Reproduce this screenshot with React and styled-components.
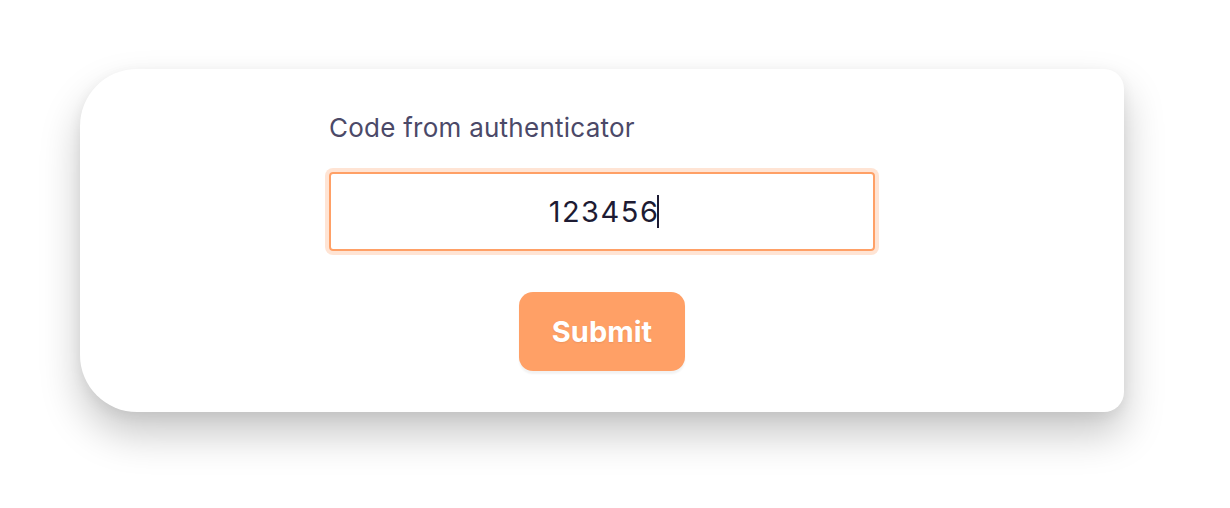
import React from "react";
import styled, { createGlobalStyle } from "styled-components";

const Global = createGlobalStyle`
  html, body { margin: 0; padding: 0; background: #ffffff; }
  body { font-family: Inter, "Noto Sans", sans-serif; }
  * { box-sizing: border-box; }
`;

const Page = styled.div`
  width: 1230px;
  height: 508px;
  padding: 69px 0 0 80px;
`;

const Card = styled.div`
  width: 1044px;
  height: 343px;
  background: #ffffff;
  border-radius: 57px 20px 20px 57px;
  box-shadow: 0 22px 40px rgba(0, 0, 0, 0.22), 0 4px 14px rgba(0, 0, 0, 0.06);
  display: flex;
  flex-direction: column;
  align-items: center;
  padding-top: 43px;
`;

const Form = styled.div`
  width: 546px;
  display: flex;
  flex-direction: column;
  align-items: center;
`;

const Label = styled.label`
  align-self: flex-start;
  font-size: 26px;
  letter-spacing: 0.25px;
  line-height: 32px;
  color: #4b4968;
  font-weight: 400;
`;

const Field = styled.div`
  margin-top: 28px;
  width: 546px;
  height: 79px;
  border: 2px solid #ffa066;
  border-radius: 4px;
  box-shadow: 0 0 0 4px #ffe4d4;
  display: flex;
  align-items: center;
  justify-content: center;
  font-size: 29px;
  letter-spacing: 1.5px;
  color: #1d1b33;
  padding-left: 4px;
`;

const Caret = styled.span`
  display: inline-block;
  width: 2px;
  height: 33px;
  background: #1d1b33;
  margin-left: -2px;
`;

const Button = styled.button`
  margin-top: 41px;
  width: 166px;
  height: 79px;
  border: none;
  border-radius: 14px;
  background: #ffa066;
  color: #ffffff;
  font-family: Inter, "Noto Sans", sans-serif;
  font-size: 29px;
  font-weight: 700;
  box-shadow: 0 3px 2px rgba(0, 0, 0, 0.05);
  text-shadow: 0 1px 2px rgba(0, 0, 0, 0.08);
`;

export default function App() {
  return (
    <>
      <Global />
      <Page>
        <Card>
          <Form>
            <Label>Code from authenticator</Label>
            <Field>
              123456
              <Caret />
            </Field>
            <Button>Submit</Button>
          </Form>
        </Card>
      </Page>
    </>
  );
}
